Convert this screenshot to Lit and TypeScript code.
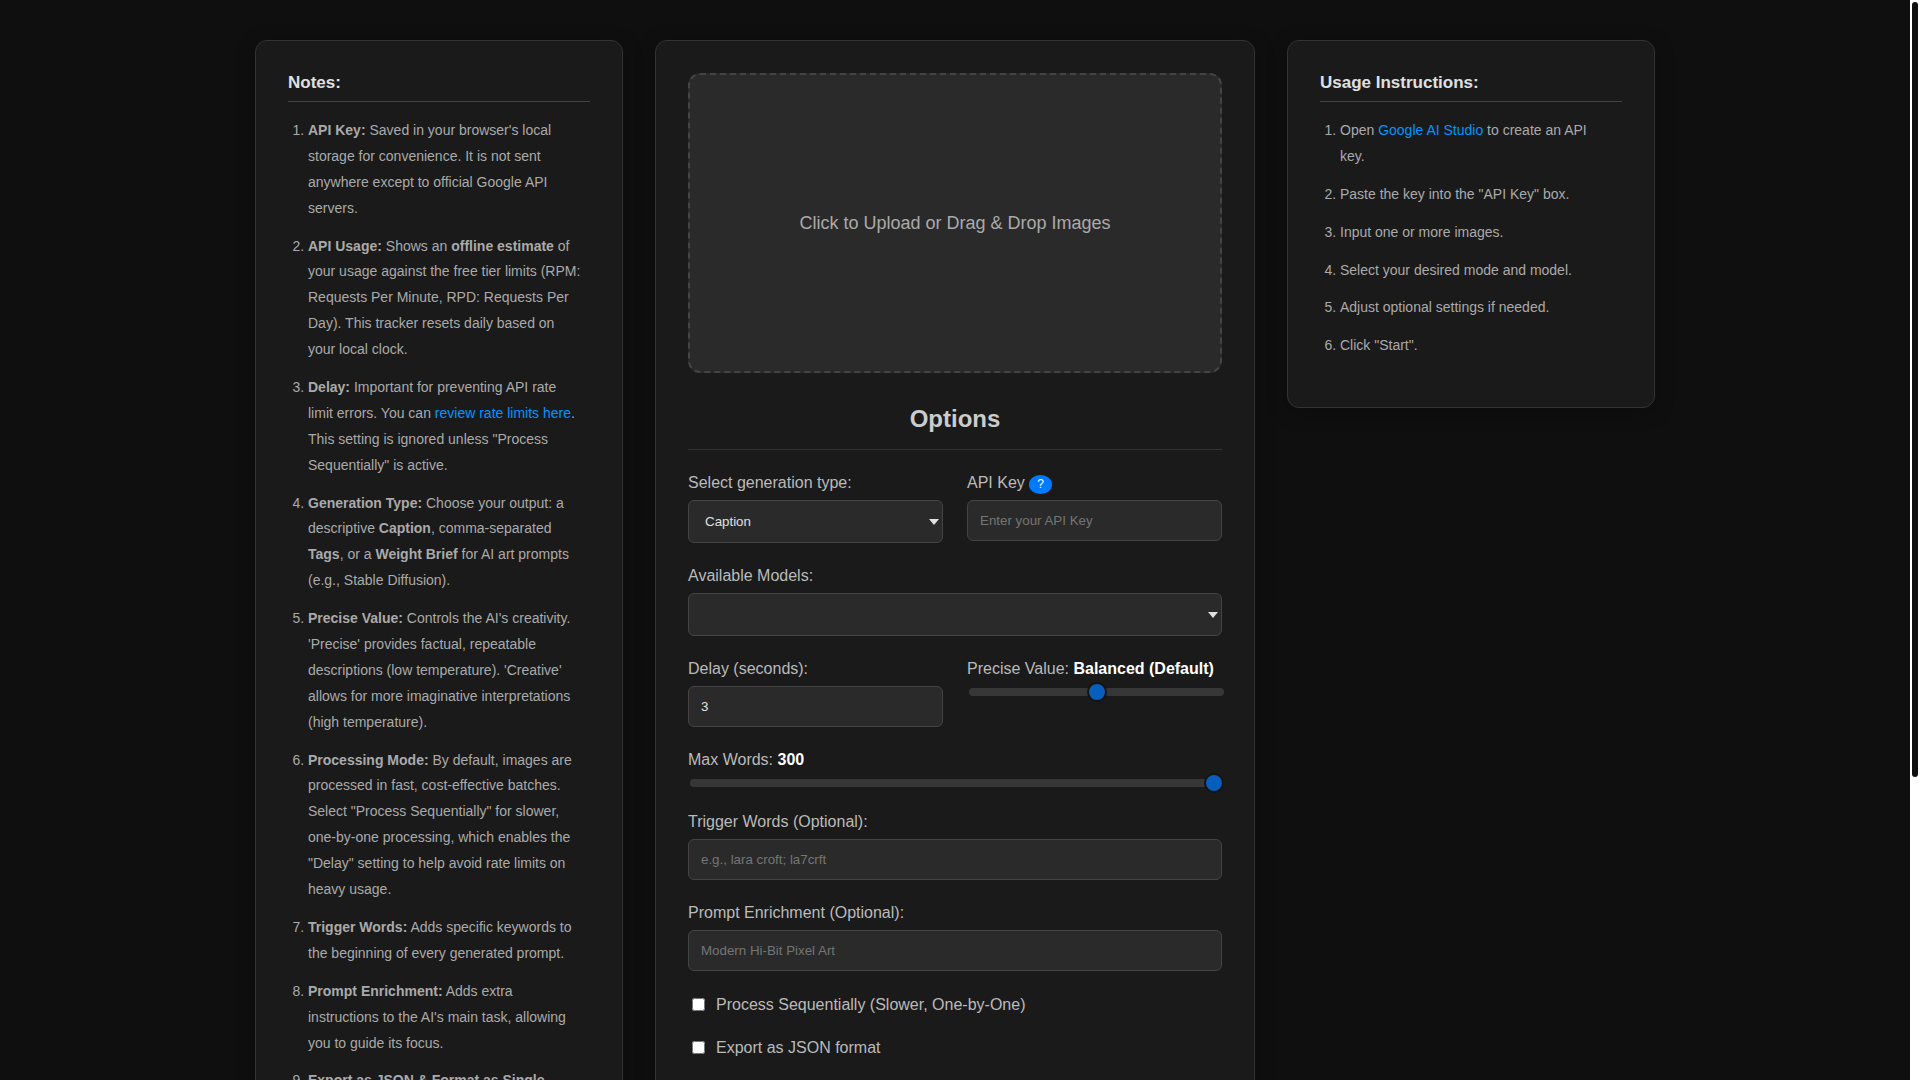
import { LitElement, html, css } from "lit";
import { customElement, state } from "lit/decorators.js";

@customElement("app-root")
export class AppRoot extends LitElement {
  static styles = css`
    :host {
      display: flex;
      height: 100vh;
      font-family: "Liberation Sans", Arial, sans-serif;
      font-size: 16px;
      color: #bbb;
      background: #0f0f0f;
    }
    * {
      box-sizing: border-box;
    }
    .page {
      flex: 1;
      min-width: 0;
      overflow-y: auto;
      scrollbar-width: none;
    }
    .rail {
      flex: none;
      width: 10px;
      padding: 2px;
      background: #fff;
    }
    .thumb {
      height: 72%;
      border-radius: 3px;
      background: #0f0f0f;
    }
    .columns {
      display: grid;
      grid-template-columns: minmax(0, 1fr) minmax(0, 600px) minmax(0, 1fr);
      align-items: start;
      gap: 32px;
      max-width: 1400px;
      margin: 0 auto;
      padding: 40px 0;
    }
    .card {
      padding: 32px;
      background: #1a1a1a;
      border: 1px solid #333;
      border-radius: 12px;
      box-shadow: 0 4px 20px rgba(0, 0, 0, 0.25);
    }
    .side-title {
      margin: 0 0 16px;
      padding-bottom: 8px;
      border-bottom: 1px solid #444;
      font-size: 17px;
      line-height: 20px;
      font-weight: 700;
      color: #e0e0e0;
    }
    .list {
      margin: 0;
      padding: 0 8px 4px 20px;
      font-size: 14px;
      line-height: 1.85;
      color: #aaa;
    }
    .list li {
      margin-bottom: 12px;
    }
    .link {
      color: #0095ff;
      text-decoration: none;
    }
    .drop {
      display: flex;
      align-items: center;
      justify-content: center;
      width: 100%;
      height: 300px;
      border: 2px dashed #444;
      border-radius: 12px;
      background: #2a2a2a;
      color: #aaa;
      font: inherit;
      font-size: 18px;
      cursor: pointer;
    }
    .title {
      margin: 32px 0 24px;
      padding-bottom: 16px;
      border-bottom: 1px solid #333;
      font-size: 24px;
      line-height: 28px;
      text-align: center;
      color: #ccc;
    }
    .form {
      display: grid;
      grid-template-columns: 1fr 1fr;
      align-items: start;
      gap: 24px;
    }
    .field {
      display: flex;
      flex-direction: column;
      gap: 8px;
      min-width: 0;
    }
    .wide {
      grid-column: 1 / -1;
    }
    .label {
      height: 18px;
      line-height: 18px;
      white-space: nowrap;
    }
    .value {
      color: #fff;
    }
    .help {
      display: inline-block;
      padding: 0 8px;
      border-radius: 50%;
      background: #007bff;
      color: #fff;
      font-size: 12px;
      line-height: 19px;
      text-decoration: none;
    }
    .control {
      width: 100%;
      padding: 12px;
      border: 1px solid #444;
      border-radius: 6px;
      background: #2a2a2a;
      color: #e0e0e0;
      font-family: inherit;
    }
    .text {
      height: 41px;
    }
    .text::placeholder {
      color: #757575;
    }
    .number {
      appearance: textfield;
    }
    .picker {
      display: grid;
      align-items: center;
    }
    .select {
      grid-area: 1 / 1;
      appearance: none;
      height: 43px;
      padding: 12px 16px;
    }
    .arrow {
      grid-area: 1 / 1;
      justify-self: end;
      width: 10px;
      height: 6px;
      margin-right: 4px;
      fill: #e0e0e0;
      pointer-events: none;
    }
    .range {
      appearance: none;
      width: 100%;
      height: 8px;
      margin: 2px;
      border-radius: 4px;
      background: #444;
      opacity: 0.7;
    }
    .range::-webkit-slider-thumb {
      appearance: none;
      width: 20px;
      height: 20px;
      border: 2px solid #111;
      border-radius: 50%;
      background: #007bff;
    }
    .check {
      display: flex;
      align-items: center;
      gap: 8px;
    }
    .box {
      margin: 3px 3px 3px 4px;
    }
    .start {
      padding: 16px;
      border: 0;
      border-radius: 6px;
      background: #007bff;
      color: #fff;
      font: inherit;
      cursor: pointer;
    }
  `;

  @state() private precise = 50;
  @state() private maxWords = 300;

  private get preciseLabel() {
    if (this.precise < 34) return "Precise";
    return this.precise > 66 ? "Creative" : "Balanced (Default)";
  }

  private arrow() {
    return html`<svg class="arrow" viewBox="0 0 10 6" aria-hidden="true"><path d="M0 0h10L5 6z" /></svg>`;
  }

  private notesCard() {
    return html`
      <aside class="card">
        <h3 class="side-title">Notes:</h3>
        <ol class="list">
          <li><strong>API Key:</strong> Saved in your browser's local storage for convenience. It is not sent anywhere except to official Google API servers.</li>
          <li><strong>API Usage:</strong> Shows an <strong>offline estimate</strong> of your usage against the free tier limits (RPM: Requests Per Minute, RPD: Requests Per Day). This tracker resets daily based on your local clock.</li>
          <li><strong>Delay:</strong> Important for preventing API rate limit errors. You can <a class="link" href="#limits">review rate limits here</a>. This setting is ignored unless "Process Sequentially" is active.</li>
          <li><strong>Generation Type:</strong> Choose your output: a descriptive <strong>Caption</strong>, comma-separated <strong>Tags</strong>, or a <strong>Weight Brief</strong> for AI art prompts (e.g., Stable Diffusion).</li>
          <li><strong>Precise Value:</strong> Controls the AI's creativity. 'Precise' provides factual, repeatable descriptions (low temperature). 'Creative' allows for more imaginative interpretations (high temperature).</li>
          <li><strong>Processing Mode:</strong> By default, images are processed in fast, cost-effective batches. Select "Process Sequentially" for slower, one-by-one processing, which enables the "Delay" setting to help avoid rate limits on heavy usage.</li>
          <li><strong>Trigger Words:</strong> Adds specific keywords to the beginning of every generated prompt.</li>
          <li><strong>Prompt Enrichment:</strong> Adds extra instructions to the AI's main task, allowing you to guide its focus.</li>
          <li><strong>Export as JSON &amp; Format as Single Paragraph:</strong> Control how the results are written.</li>
        </ol>
      </aside>
    `;
  }

  private optionsCard() {
    return html`
      <main class="card">
        <button class="drop" type="button">Click to Upload or Drag &amp; Drop Images</button>
        <h2 class="title">Options</h2>
        <form class="form">
          <div class="field">
            <label class="label" for="type">Select generation type:</label>
            <div class="picker">
              <select class="control select" id="type">
                <option>Caption</option>
                <option>Tags</option>
                <option>Weight Brief</option>
              </select>
              ${this.arrow()}
            </div>
          </div>
          <div class="field">
            <div class="label">
              <label for="key">API Key</label>
              <a class="help" href="#usage">?</a>
            </div>
            <input class="control text" id="key" type="password" placeholder="Enter your API Key" />
          </div>
          <div class="field wide">
            <label class="label" for="models">Available Models:</label>
            <div class="picker">
              <select class="control select" id="models"></select>
              ${this.arrow()}
            </div>
          </div>
          <div class="field">
            <label class="label" for="delay">Delay (seconds):</label>
            <input class="control text number" id="delay" type="number" value="3" />
          </div>
          <div class="field">
            <label class="label" for="precise">Precise Value: <strong class="value">${this.preciseLabel}</strong></label>
            <input class="range" id="precise" type="range" min="0" max="100" .value=${String(this.precise)}
              @input=${(e: Event) => (this.precise = Number((e.target as HTMLInputElement).value))} />
          </div>
          <div class="field wide">
            <label class="label" for="words">Max Words: <strong class="value">${this.maxWords}</strong></label>
            <input class="range" id="words" type="range" min="10" max="300" .value=${String(this.maxWords)}
              @input=${(e: Event) => (this.maxWords = Number((e.target as HTMLInputElement).value))} />
          </div>
          <div class="field wide">
            <label class="label" for="trigger">Trigger Words (Optional):</label>
            <input class="control text" id="trigger" type="text" placeholder="e.g., lara croft; la7crft" />
          </div>
          <div class="field wide">
            <label class="label" for="enrich">Prompt Enrichment (Optional):</label>
            <input class="control text" id="enrich" type="text" placeholder="Modern Hi-Bit Pixel Art" />
          </div>
          <label class="check wide"><input class="box" type="checkbox" />Process Sequentially (Slower, One-by-One)</label>
          <label class="check wide"><input class="box" type="checkbox" />Export as JSON format</label>
          <label class="check wide"><input class="box" type="checkbox" />Format as Single Paragraph</label>
          <button class="start wide" type="button">Start</button>
        </form>
      </main>
    `;
  }

  private usageCard() {
    return html`
      <aside class="card" id="usage">
        <h3 class="side-title">Usage Instructions:</h3>
        <ol class="list">
          <li>Open <a class="link" href="#studio">Google AI Studio</a> to create an API key.</li>
          <li>Paste the key into the "API Key" box.</li>
          <li>Input one or more images.</li>
          <li>Select your desired mode and model.</li>
          <li>Adjust optional settings if needed.</li>
          <li>Click "Start".</li>
        </ol>
      </aside>
    `;
  }

  render() {
    return html`
      <div class="page">
        <div class="columns">${this.notesCard()} ${this.optionsCard()} ${this.usageCard()}</div>
      </div>
      <div class="rail" aria-hidden="true"><div class="thumb"></div></div>
    `;
  }
}
